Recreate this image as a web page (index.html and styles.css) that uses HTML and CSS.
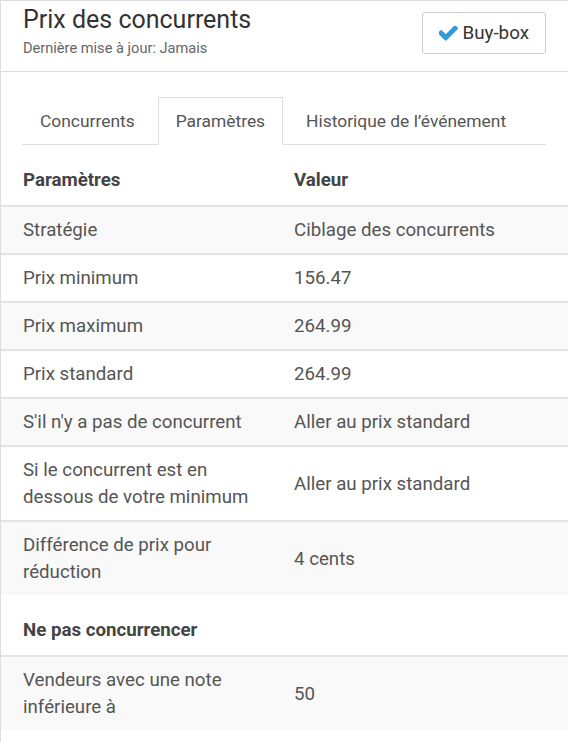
FILE: index.html
```html
<!DOCTYPE html>
<html lang="fr">
<head>
<meta charset="UTF-8">
<meta name="viewport" content="width=device-width, initial-scale=1.0">
<title>Prix des concurrents</title>
<link rel="stylesheet" href="styles.css">
</head>
<body>

<div class="panel">
  <div class="panel-heading">
    <div class="heading-text">
      <h1 class="panel-title">Prix des concurrents</h1>
      <div class="panel-subtitle">Dernière mise à jour: Jamais</div>
    </div>
    <button class="btn" type="button">
      <svg class="icon-check" viewBox="189 400 1482 1124" aria-hidden="true">
        <path d="M1671 566q0 40-28 68l-724 724-136 136q-28 28-68 28t-68-28l-136-136-362-362q-28-28-28-68t28-68l136-136q28-28 68-28t68 28l294 295 656-657q28-28 68-28t68 28l136 136q28 28 28 68z"/>
      </svg>
      Buy-box
    </button>
  </div>

  <ul class="tabs">
    <li>Concurrents</li>
    <li class="active">Paramètres</li>
    <li>Historique de l’événement</li>
  </ul>

  <!-- Strategy settings -->
  <table class="settings">
    <colgroup>
      <col class="col-name">
      <col>
    </colgroup>
    <thead>
      <tr>
        <th>Paramètres</th>
        <th>Valeur</th>
      </tr>
    </thead>
    <tbody>
      <tr>
        <td>Stratégie</td>
        <td>Ciblage des concurrents</td>
      </tr>
      <tr>
        <td>Prix minimum</td>
        <td>156.47</td>
      </tr>
      <tr>
        <td>Prix maximum</td>
        <td>264.99</td>
      </tr>
      <tr>
        <td>Prix standard</td>
        <td>264.99</td>
      </tr>
      <tr>
        <td>S'il n'y a pas de concurrent</td>
        <td>Aller au prix standard</td>
      </tr>
      <tr>
        <td>Si le concurrent est en dessous de votre minimum</td>
        <td>Aller au prix standard</td>
      </tr>
      <tr>
        <td>Différence de prix pour réduction</td>
        <td>4 cents</td>
      </tr>
    </tbody>
  </table>

  <!-- Excluded sellers -->
  <table class="settings">
    <colgroup>
      <col class="col-name">
      <col>
    </colgroup>
    <thead>
      <tr>
        <th colspan="2">Ne pas concurrencer</th>
      </tr>
    </thead>
    <tbody>
      <tr>
        <td>Vendeurs avec une note inférieure à</td>
        <td>50</td>
      </tr>
    </tbody>
  </table>
</div>

</body>
</html>
```

FILE: styles.css
```css
/* General Styles */
body {
  font-family: Roboto, "Liberation Sans", Arial, sans-serif;
  margin: 0;
  padding: 0;
  color: #555;
  background-color: #fff;
  overflow: hidden;
}

.panel {
  border-top: 1px solid #ddd;
  border-left: 1px solid #ddd;
  min-height: 741px;
}

/* Heading */
.panel-heading {
  display: flex;
  justify-content: space-between;
  align-items: flex-start;
  padding: 4px 22px 13px 22px;
  border-bottom: 1px solid #ddd;
}

.panel-title {
  margin: 0;
  font-size: 25px;
  font-weight: 400;
  line-height: 30px;
  color: #333;
}

.panel-subtitle {
  margin-top: 3px;
  font-size: 14.6px;
  line-height: 20px;
  color: #666;
}

.btn {
  display: flex;
  align-items: center;
  gap: 4px;
  margin-top: 7px;
  height: 42px;
  padding: 0 16px;
  font-family: inherit;
  font-size: 18.8px;
  color: #333;
  background-color: #fff;
  border: 1px solid #ccc;
  border-radius: 3px;
  cursor: pointer;
}

.icon-check {
  width: 19px;
  height: 15px;
  fill: #2d9cdb;
}

/* Tabs */
.tabs {
  display: flex;
  list-style: none;
  margin: 25px 22px 0 21px;
  padding: 0;
  border-bottom: 1px solid #ddd;
}

.tabs li {
  margin-right: 5px;
  margin-bottom: -1px;
  padding: 12px 17px;
  font-size: 17.4px;
  line-height: 22px;
  color: #555;
  border: 1px solid transparent;
}

.tabs li.active {
  background-color: #fff;
  border-color: #ddd;
  border-bottom-color: #fff;
}

/* Table Styles */
.settings {
  width: 100%;
  border-collapse: collapse;
  table-layout: fixed;
  font-size: 18.7px;
  line-height: 27px;
}

.settings .col-name {
  width: 271px;
}

.settings th {
  padding: 22px 10px 11px 22px;
  text-align: left;
  font-weight: 700;
  color: #444;
  border-bottom: 2px solid #e3e3e3;
}

.settings td {
  padding: 10px 10px 9px 22px;
  text-align: left;
  vertical-align: middle;
  border-top: 2px solid #e3e3e3;
}

.settings tbody tr:first-child td {
  border-top: none;
}

.settings tbody tr:nth-child(odd) {
  background-color: #f9f9f9;
}
```
